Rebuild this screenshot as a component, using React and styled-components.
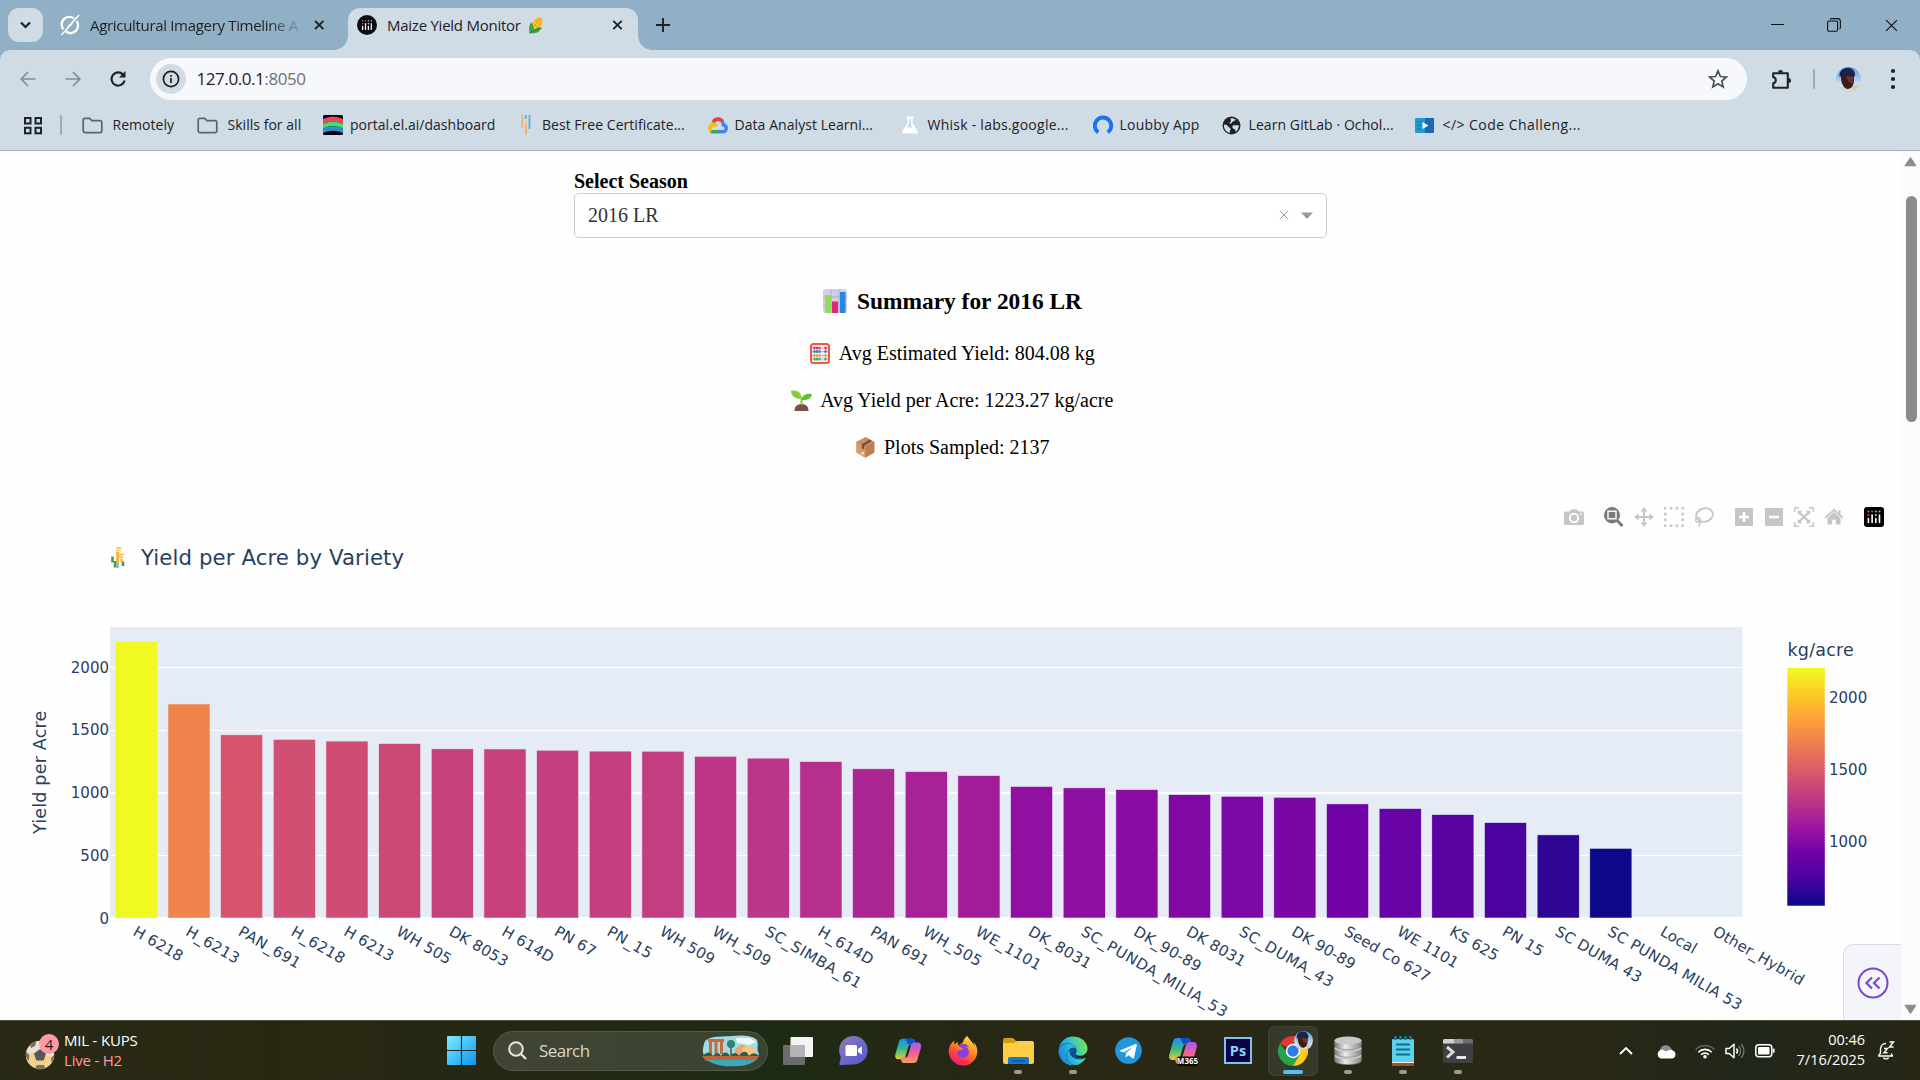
import React from "react";
import styled, { createGlobalStyle, css } from "styled-components";
import { FaEdge, FaFirefoxBrowser } from "react-icons/fa";

const UI = `"Open Sans", "Noto Sans", sans-serif`;
const SERIF = `"Liberation Serif", serif`;
const PLOT = `"DejaVu Sans", sans-serif`;

const Global = createGlobalStyle`
  * { box-sizing: border-box; }
  body { margin: 0; overflow: hidden; }
  svg { display: block; flex: none; }
`;

const Screen = styled.div`
  width: 1920px;
  height: 1080px;
  display: flex;
  flex-direction: column;
  overflow: hidden;
  font-family: ${UI};
  color: #1f2124;
`;

/* ---------- browser frame ---------- */

const TabStrip = styled.div`
  height: 50px;
  display: flex;
  background: #91afc5;
  flex: none;
`;

const TabSearch = styled.div`
  width: 35px;
  height: 34px;
  margin: 8px 0 0 8px;
  border-radius: 11px;
  background: #cfdce5;
  display: flex;
  align-items: center;
  justify-content: center;
`;

const Tab = styled.div`
  position: relative;
  display: flex;
  align-items: center;
  height: 42px;
  margin-top: 8px;
  padding-bottom: 8px;
  width: ${(p) => p.$w}px;
  padding-left: ${(p) => p.$pl}px;
  ${(p) =>
    p.$active &&
    css`
      background: #cfdce5;
      border-radius: 12px 12px 0 0;
      &::before,
      &::after {
        content: "";
        position: absolute;
        bottom: 0;
        width: 14px;
        height: 14px;
      }
      &::before {
        left: -14px;
        background: radial-gradient(circle at 0 0, #91afc5 13.5px, #cfdce5 14px);
      }
      &::after {
        right: -14px;
        background: radial-gradient(circle at 100% 0, #91afc5 13.5px, #cfdce5 14px);
      }
    `}
`;

const TabTitle = styled.div`
  font-size: 15px;
  line-height: 20px;
  white-space: nowrap;
  overflow: hidden;
  margin-left: ${(p) => p.$ml}px;
  width: ${(p) => p.$w}px;
  letter-spacing: ${(p) => p.$ls || 0}px;
  ${(p) => p.$fade && "mask-image: linear-gradient(90deg, #000 84%, transparent 101%);"}
`;

const NewTab = styled.div`
  width: 50px;
  height: 50px;
  display: flex;
  align-items: center;
  justify-content: center;
`;

const WindowButtons = styled.div`
  margin-left: auto;
  display: flex;
  height: 50px;
  align-items: center;
`;

const WindowButton = styled.div`
  width: 57px;
  display: flex;
  justify-content: center;
`;

const ToolbarBack = styled.div`
  background: #91afc5;
  flex: none;
`;

const Toolbar = styled.div`
  height: 58px;
  padding-left: 5px;
  background: #cfdce5;
  border-radius: 10px 10px 0 0;
  display: flex;
  align-items: center;
`;

const NavButton = styled.div`
  width: 45px;
  display: flex;
  justify-content: center;
`;

const Omnibox = styled.div`
  height: 42px;
  width: 1597px;
  margin-left: 10px;
  border-radius: 21px;
  background: #f6f8fc;
  display: flex;
  align-items: center;
  padding: 0 19px 0 6px;
`;

const SiteInfo = styled.div`
  width: 30px;
  height: 30px;
  border-radius: 50%;
  background: #cfdce5;
  display: flex;
  align-items: center;
  justify-content: center;
`;

const Url = styled.div`
  margin-left: 10.5px;
  font-size: 17px;
  line-height: 24px;
  letter-spacing: -0.43px;
  flex: 1;
  span { color: #6d7177; }
`;

const ToolbarEnd = styled.div`
  display: flex;
  align-items: center;
  flex: 1;
  padding-left: 24px;
`;

const Rule = styled.div`
  width: 2px;
  height: 20px;
  border-radius: 1px;
  background: #91afc5;
  margin: ${(p) => p.$m};
`;

const Bookmarks = styled.div`
  height: 43px;
  background: #cfdce5;
  border-bottom: 1px solid #a4afbb;
  display: flex;
  align-items: center;
  padding: 0 0 8px 22.5px;
  flex: none;
`;

const Bookmark = styled.div`
  display: flex;
  align-items: center;
  width: ${(p) => p.$w}px;
  flex: none;
`;

const BookmarkIcon = styled.div`
  width: ${(p) => p.$w}px;
  flex: none;
`;

const BookmarkLabel = styled.div`
  font-size: 14px;
  line-height: 20px;
  white-space: nowrap;
  letter-spacing: ${(p) => p.$ls}px;
`;

/* ---------- page ---------- */

const Page = styled.div`
  height: 869px;
  flex: none;
  display: flex;
  background: #fefefe;
  overflow: hidden;
`;

const Content = styled.main`
  width: 1901px;
  position: relative;
  overflow: hidden;
  font-family: ${SERIF};
  font-size: 20px;
  color: #000;
`;

const Field = styled.div`
  width: 753px;
  margin: 19px auto 0;
`;

const FieldLabel = styled.div`
  font-weight: bold;
  line-height: 23px;
`;

const Dropdown = styled.div`
  height: 45px;
  border: 1px solid #ccc;
  border-radius: 5px;
  background: #fff;
  display: flex;
  align-items: center;
  justify-content: space-between;
  padding: 0 13px;
  color: #333;
`;

const DropdownIcons = styled.div`
  display: flex;
  align-items: center;
  gap: 12px;
  padding-bottom: 1px;
`;

const Summary = styled.section`
  margin-top: 49px;
  display: flex;
  flex-direction: column;
  align-items: center;
`;

const Heading = styled.h3`
  margin: 0 0 25px;
  font-size: 23.4px;
  line-height: 28px;
  display: flex;
  gap: 6px;
`;

const Stat = styled.p`
  margin: 0 0 20px;
  line-height: 27px;
  display: flex;
  gap: 5px;
`;

const EmojiBox = styled.span`
  width: ${(p) => p.$w}px;
  height: ${(p) => p.$h}px;
  display: flex;
  align-items: center;
  justify-content: center;
`;

const Modebar = styled.div`
  display: flex;
  align-items: center;
  justify-content: flex-end;
  height: 20px;
  margin-top: 26px;
  padding-right: 17px;
`;

const ModeGroup = styled.div`
  display: flex;
  gap: 10px;
  margin-left: ${(p) => p.$ml}px;
`;

const Chart = styled.svg`
  margin-top: 3px;
  font-family: ${PLOT};
  fill: #2a3f5f;
`;

const ChartTitle = styled.text`
  font-size: 21.25px;
  letter-spacing: 0.1px;
`;

const AxisTitle = styled.text`
  font-size: 17.5px;
  letter-spacing: 0.2px;
`;

const TickText = styled.text`
  font-size: 15px;
`;

const SidePanelHandle = styled.div`
  position: absolute;
  right: 0;
  bottom: 0;
  width: 58px;
  height: 76px;
  border: 1px solid #d8d9ea;
  border-width: 1px 0 0 1px;
  border-radius: 10px 0 0 0;
  background: #f4f5fb;
  display: flex;
  justify-content: center;
  padding-top: 22px;
`;

const Scrollbar = styled.div`
  width: 19px;
  background: #fbfbfb;
  display: flex;
  flex-direction: column;
  align-items: center;
  padding: 5px 0 5px;
`;

const Thumb = styled.div`
  width: 11px;
  height: 226px;
  border-radius: 6px;
  background: #8b8b8b;
  margin: 29px 0 auto 1px;
`;

/* ---------- taskbar ---------- */

const Taskbar = styled.footer`
  height: 60px;
  flex: none;
  border-top: 1px solid #4b4c3a;
  background: linear-gradient(90deg, #292a16 0%, #292712 14%, #252814 26%, #1d2a13 40%, #262815 50%, #2b2814 58%, #262916 70%, #2a2815 82%, #20261a 91%, #282716 100%);
  display: flex;
  align-items: center;
  color: #fff;
`;

const Widget = styled.div`
  display: flex;
  align-items: center;
  width: 434px;
  padding-left: 25px;
`;

const WidgetText = styled.div`
  margin: 0 0 2px 3px;
  font-size: 15px;
  line-height: 20px;
  letter-spacing: -0.2px;
  div + div { color: #ff99a4; }
`;

const Start = styled.div`
  width: 59px;
  padding-left: 13px;
`;

const SearchBox = styled.div`
  width: 275px;
  height: 40px;
  border-radius: 20px;
  border: 1px solid #55594a;
  background: linear-gradient(90deg, #414432, #384531);
  display: flex;
  align-items: center;
  padding: 0 7px 0 14px;
  font-size: 17px;
  color: #d6d7d0;
  letter-spacing: -0.55px;
`;

const SearchText = styled.div`
  margin-left: 12px;
  flex: 1;
`;

const Apps = styled.div`
  display: flex;
  margin-left: 2.5px;
`;

const AppSlot = styled.div`
  width: 55px;
  height: 59px;
  position: relative;
  display: flex;
  align-items: center;
  justify-content: center;
  &::after {
    content: "";
    display: ${(p) => (p.$state ? "block" : "none")};
    position: absolute;
    bottom: 6px;
    width: ${(p) => (p.$state === "active" ? 20 : 8)}px;
    height: 4px;
    border-radius: 2px;
    background: ${(p) => (p.$state === "active" ? "#4cc2ff" : "#9b9b90")};
  }
`;

const AppFace = styled.div`
  width: 50px;
  height: 50px;
  border-radius: 6px;
  display: flex;
  align-items: center;
  justify-content: center;
  ${(p) => p.$active && "background: #37392a; border: 1px solid #414334;"}
`;

const Tray = styled.div`
  margin-left: auto;
  display: flex;
  align-items: center;
  padding-right: 13px;
`;

const TrayIcon = styled.div`
  width: ${(p) => p.$w}px;
  display: flex;
  justify-content: center;
`;

const Clock = styled.div`
  width: 81px;
  margin-bottom: 2px;
  text-align: right;
  font-size: 14.5px;
  line-height: 20px;
  letter-spacing: -0.03px;
`;

/* ---------- icons ---------- */

const Svg = ({ w = 20, h, vb, children, ...rest }) => (
  <svg width={w} height={h || w} viewBox={vb || `0 0 ${w} ${h || w}`} fill="none" {...rest}>
    {children}
  </svg>
);

const CloseX = ({ s = 10, c = "#1f2124", sw = 1.9 }) => (
  <Svg w={s} vb="0 0 10 10">
    <path d="M.8.8l8.400 8.400M9.200.8L.8 9.200" stroke={c} strokeWidth={sw} />
  </Svg>
);

const GrokIcon = () => (
  <Svg w={20} h={22} vb="0 0 20 22">
    <path d="M14 4.6A7.6 7.6 0 0 0 3.4 15.4M6 17.6A7.6 7.6 0 0 0 16.6 7" stroke="#fff" strokeWidth="2.4" />
    <path d="M19 1L7.6 13.4M12.6 8.8L1.4 21" stroke="#fff" strokeWidth="1.5" />
  </Svg>
);

const PlotlyMark = ({ round }) => (
  <Svg w={20}>
    <rect width="20" height="20" rx={round ? 10 : 3} fill={round ? "#0b0d14" : "#000"} />
    <g transform={round ? "translate(2.2 2.4) scale(.78)" : ""}>
      <g stroke="#fff" strokeWidth="1.6" strokeLinecap="round">
        <path d="M4.4 11.5v4M8.1 8v7.5M11.8 11.5v4M15.5 8v7.5" />
      </g>
      <g>
        <circle cx="4.4" cy="4.4" r="1" fill="#e763a0" />
        <circle cx="8.1" cy="4.4" r="1" fill="#ff2c6d" />
        <circle cx="11.8" cy="4.4" r="1" fill="#b7a4d8" />
        <circle cx="15.5" cy="4.4" r="1" fill="#8fb8e8" />
        <circle cx="4.4" cy="8" r="1" fill="#ff2c6d" />
        <circle cx="11.8" cy="8" r="1" fill="#cfc4e8" />
      </g>
    </g>
  </Svg>
);

const Corn = () => (
  <Svg w={16} h={18} vb="0 0 16 18">
    <path d="M4 11C4 5 8 .5 13.500 1.200 16 6 13 12 8 15z" fill="#fcc21b" />
    <path d="M7 4.500l6 5M9 2.500l5 4M5.500 7.500l5 4.500M12.500 1.500L5 12" stroke="#f79329" strokeWidth=".7" />
    <path d="M3.500 6C1 9 .5 13 1.500 17 6 18.200 11 17 13.500 12 10 10.500 8 12 6.500 14 5.500 11 5 8 3.500 6z" fill="#3aa84a" />
    <path d="M1.500 17C5 15.500 9 12.500 13.500 12" stroke="#1f7a38" strokeWidth=".9" />
  </Svg>
);

const Folder = () => (
  <Svg w={21} h={17}>
    <path d="M1.200 3.200c0-1.200.7-1.900 1.800-1.900h4.600l2.300 2.300h8c1.200 0 1.900.8 1.900 1.900v8.300c0 1.200-.7 1.900-1.900 1.900H3c-1.100 0-1.800-.7-1.800-1.900z" stroke="#5f6368" strokeWidth="1.700" />
  </Svg>
);

const PortalIcon = () => (
  <Svg w={20}>
    <rect width="20" height="20" rx="1.500" fill="#050505" />
    <path d="M0 4Q10-1 20 4v5Q10 4 0 9z" fill="#ee4560" />
    <path d="M0 9Q10 4 20 9v4.500Q10 9 0 13.500z" fill="#48dd6b" />
    <path d="M0 13.500Q10 9 20 13.500V18Q10 13.500 0 18z" fill="#2b8fd0" />
  </Svg>
);

const BarsIcon = () => (
  <Svg w={10} h={22}>
    <path d="M1.300 1v13M5 7v1.500M5 10v11" stroke="#f2b366" strokeWidth="1.800" />
    <path d="M4.800 1v4M8.500 1v14" stroke="#52b3dd" strokeWidth="1.800" />
  </Svg>
);

const CloudIcon = () => (
  <Svg w={20} h={17}>
    <path d="M5.200 5.500a5.200 5.200 0 0 1 9.400-.8" stroke="#ea4335" strokeWidth="3.600" />
    <path d="M14 4.500c1 .9 1.300 2 1.400 3.200a3.600 3.600 0 0 1-.8 7.100H10" stroke="#4285f4" strokeWidth="3.600" />
    <path d="M10 14.800H5.200c-.9 0-1.500-.2-2.100-.6" stroke="#34a853" strokeWidth="3.600" />
    <path d="M3.400 14.300A3.800 3.800 0 0 1 5.300 7.500c1.300 0 2.500.6 3.100 1.700" stroke="#fbbc05" strokeWidth="3.600" />
  </Svg>
);

const Flask = () => (
  <Svg w={16} h={18}>
    <path d="M4.500.5h7v2h-1v4.500l5 8c.8 1.500 0 2.500-1.500 2.500H2c-1.500 0-2.300-1-1.500-2.500l5-8V2.500h-1z" fill="#fff" />
    <path d="M7 3v4.500l-2.600 4h4.400l1.200 1.300L9 7.500V3z" fill="#cfdce5" />
  </Svg>
);

const Loubby = () => (
  <Svg w={20} h={20}>
    <path d="M5.200 17.400A8.200 8.200 0 1 1 14.800 17.400" stroke="#1a73f0" strokeWidth="4" />
  </Svg>
);

const Globe = () => (
  <Svg w={19}>
    <circle cx="9.500" cy="9.500" r="9" fill="#1f2124" />
    <path d="M2 8.500c2 .3 3.600.5 4 2 .3 1.100 2.200.6 2.500 2 .2 1.200-.8 2-.8 4.500C4 16 1.500 12.500 2 8.500zM8.500 2.300C10 2 13 2.600 14 4c-1.500.2-1.800 1.300-3 1.500-1.600.3-1 2-2.500 2.200C7 7.800 7.500 6 9 5.500zM11 9.500c2-.7 4 0 5.800-.5.3 3-1.500 5.800-3.300 6.800 0-2-.5-2.600-2-3-1.300-.4-1.500-2.800-.5-3.300z" fill="#cfdce5" />
  </Svg>
);

const CodeIcon = () => (
  <Svg w={19} h={15}>
    <rect width="19" height="15" rx="1" fill="#1f9bcf" />
    <path d="M10 0h8a1 1 0 0 1 1 1v13a1 1 0 0 1-1 1h-8z" fill="#1c69b0" />
    <path d="M2 4h5M2 7.500h4M2 11h5" stroke="#1777ad" strokeWidth="1" />
    <path d="M7.500 4l6 3.500-6 3.500z" fill="#fff" />
  </Svg>
);

const Puzzle = () => (
  <Svg w={22} h={22}>
    <path d="M2.200 5.200h14.600v14.600H2.200v-4.600c3.400-.3 3.400-5.600 0-5.900z" stroke="#1f2124" strokeWidth="2.100" strokeLinejoin="round" />
    <path d="M7 4.600a2.500 2.600 0 0 1 5 0zM17.400 10a2.600 2.500 0 0 1 0 5z" fill="#1f2124" />
  </Svg>
);

const Avatar = ({ s = 25, id }) => (
  <Svg w={s} vb="0 0 25 25">
    <defs>
      <clipPath id={id}><circle cx="12.500" cy="12.500" r="12.500" /></clipPath>
      <linearGradient id={id + "s"} x2="0" y2="1"><stop stopColor="#5d9bdd" /><stop offset=".8" stopColor="#dceaf6" /></linearGradient>
    </defs>
    <g clipPath={`url(#${id})`}>
      <rect width="25" height="25" fill={`url(#${id}s)`} />
      <path d="M12 20l13-3v8H0v-5z" fill="#d5cba7" />
      <path d="M3 25c0-5 4-7 9-6 4 .5 6 3 7 6z" fill="#cfd9d2" />
      <path d="M5 8c-.5 7 2 13 6.500 14 4 0 6.500-4 6.500-9V8z" fill="#3a1d17" />
      <path d="M10 9c2 6 4 8 7 7l.5-6z" fill="#6b352a" />
      <path d="M3.500 10C3 4 7 .5 12 .8c5 .2 7.500 4 7 8.700-3-2-8-2-9.500-.5C7.500 8.500 5 9 3.500 10z" fill="#17244f" />
    </g>
  </Svg>
);

const BarEmoji = () => (
  <Svg w={24} h={24}>
    <rect width="24" height="24" rx="3" fill="#d3cfe2" />
    <path d="M0 8h24M0 16h24M8 0v24M16 0v24" stroke="#b3adc8" strokeWidth="1" />
    <rect x="2" y="6" width="6" height="18" fill="#8ddf5b" />
    <rect x="9" y="12.500" width="6" height="11.500" fill="#e2247a" />
    <rect x="17" y="3" width="5.500" height="21" fill="#2489e0" />
  </Svg>
);

const Abacus = () => {
  const rows = [[5, "#e8305f"], [8.5, "#2f7fd0"], [12.5, "#f5a524"], [16, "#2fae74"]];
  return (
    <Svg w={20} h={21}>
      <rect x="1" y="1" width="18" height="19" rx="2.500" fill="#f3eef6" stroke="#f4563f" strokeWidth="2" />
      {rows.map(([y, c]) => (
        <g key={y} fill={c}>
          <path d={`M2 ${y}h16`} stroke="#a9a3b5" strokeWidth=".7" />
          {[4.5, 7, 9.5, 15.5].map((x) => <ellipse key={x} cx={x} cy={y} rx="1.250" ry="1.600" />)}
        </g>
      ))}
    </Svg>
  );
};

const Seedling = () => (
  <Svg w={21} h={21}>
    <path d="M3.500 21c0-5 3-7 7-7s7 2 7 7z" fill="#7d4e46" />
    <path d="M10.500 15V9" stroke="#7fc93a" strokeWidth="2" />
    <path d="M0 .8C6-.5 10.500 2 10.800 9 4.500 9 .5 7 0 .8z" fill="#82cf3a" />
    <path d="M21 4C15 3 11 5 10.500 10 16 10.500 20.500 9 21 4z" fill="#69bd33" />
  </Svg>
);

const Package = () => (
  <Svg w={19} h={21}>
    <path d="M9.500.3L18.500 5v10.500l-9 5.200-9-5.200V5z" fill="#b97f55" />
    <path d="M.5 5l9 4.700v11l-9-5.200z" fill="#d79a6b" />
    <path d="M9.500.3L18.500 5l-9 4.700L.5 5z" fill="#c78f63" />
    <path d="M13.500 2.400L5.800 7.200v4l2.400 1.300V8.700L16 4z" fill="#7b4f35" />
    <rect x="5.500" y="15" width="2.600" height="2.600" fill="#f2ded0" />
  </Svg>
);

const G = "#c6c6c6";
const Camera = () => (
  <Svg w={20}>
    <path d="M1.500 4.500h4L7 2.200h6l1.500 2.300h4A1.500 1.500 0 0 1 20 6v10.500a1.500 1.500 0 0 1-1.500 1.500h-17A1.500 1.500 0 0 1 0 16.500V6a1.500 1.500 0 0 1 1.500-1.500z" fill={G} />
    <circle cx="10" cy="11" r="4.200" stroke="#fff" strokeWidth="1.900" />
    <rect x="16.300" y="6.300" width="1.700" height="1.500" fill="#fff" />
  </Svg>
);
const ZoomIcon = () => (
  <Svg w={20}>
    <ellipse cx="8" cy="8.200" rx="8" ry="8.200" fill="#7a7a7a" />
    <path d="M12.500 13l6 6" stroke="#7a7a7a" strokeWidth="3" />
    <rect x="4" y="4.200" width="8" height="7.600" stroke="#fff" strokeWidth="1.400" />
  </Svg>
);
const Pan = () => (
  <Svg w={20}>
    <path d="M10 3v14M3 10h14" stroke={G} strokeWidth="1.900" />
    <path d="M10 0l3.500 4.500h-7zM10 20l3.500-4.500h-7zM0 10l4.500-3.500v7zM20 10l-4.500-3.500v7z" fill={G} />
  </Svg>
);
const BoxSelect = () => (
  <Svg w={20}>
    <path d="M0 1.300h20M0 18.700h20" stroke={G} strokeWidth="2.500" strokeDasharray="2.500 3.300" />
    <path d="M1.300 5.800v10M18.700 5.800v10" stroke={G} strokeWidth="2.500" strokeDasharray="2.500 3.300" />
  </Svg>
);
const Lasso = () => (
  <Svg w={20}>
    <ellipse cx="10.500" cy="8" rx="8.500" ry="6.700" transform="rotate(-14 10.500 8)" stroke={G} strokeWidth="1.900" />
    <path d="M2.500 11c-1.500 1.500-1 4 1 4.200 2.500.2 3.500-2 2.400-3.500-.8-1.200-2.400-1.200-3.400-.7M5.700 14.500c.5 1.800.2 3.500-1.300 5" stroke={G} strokeWidth="1.500" />
  </Svg>
);
const Sq = ({ plus }) => (
  <Svg w={20}>
    <rect x="1" y="1" width="18" height="18" fill={G} />
    <path d={plus ? "M10 5v10M5 10h10" : "M5 10h10"} stroke="#fff" strokeWidth="2.600" />
  </Svg>
);
const AutoScale = () => (
  <Svg w={20}>
    <path d="M.7 5V.7H5M15 .7h4.300V5M19.300 15v4.300H15M5 19.300H.7V15" stroke={G} strokeWidth="1.400" />
    <path d="M5 5l10 10M15 5L5 15" stroke={G} strokeWidth="2.200" />
    <path d="M3.800 3.800h4.500L3.800 8.300zM16.200 3.800v4.500l-4.500-4.500zM16.200 16.200h-4.500l4.500-4.500zM3.800 16.200v-4.500l4.500 4.500z" fill={G} />
  </Svg>
);
const Home = () => (
  <Svg w={20}>
    <path d="M3.500 11L10 5l6.500 6v6.500h-4.700v-4.700H8.200v4.700H3.500z" fill={G} />
    <path d="M1.200 10.800L10 3l8.800 7.800M15.600 3v4.500" stroke={G} strokeWidth="1.900" />
  </Svg>
);

const Ball = () => (
  <Svg w={36} h={40}>
    <circle cx="15" cy="24" r="14.200" fill="#f0d28c" />
    <path d="M15 10a14 14 0 0 1 14 14c-4 4-8-2-14-3-5-1-10 4-13.500 0A14 14 0 0 1 15 10z" fill="#e8e2d4" />
    <path d="M15 18l6 4.500-2.300 7h-7.400L9 22.500z" fill="#55565c" />
    <path d="M1 21l3.500 3-1 6C1 27 .5 24 1 21zM10 37l2-3h7l1 3c-3 1.500-7 1.500-10 0zM5 14c2-2.500 4-3.300 6.500-3.700L10 15l-4 2zM29 24l-3 3 .5 4.500C28.500 29 29 27 29 24z" fill="#77715f" />
    <circle cx="24" cy="13" r="10" fill="#ff99a4" />
    <text x="24" y="18.500" fontSize="15" textAnchor="middle" fill="#1b1b1b" fontFamily="Open Sans, sans-serif">4</text>
  </Svg>
);

const WinLogo = () => (
  <Svg w={29} h={29}>
    <defs><linearGradient id="win" x2="1" y2="1"><stop stopColor="#7df0ff" /><stop offset="1" stopColor="#0a93f5" /></linearGradient></defs>
    <path d="M0 1a1 1 0 0 1 1-1h12.900v13.900H0zM15.100 0H28a1 1 0 0 1 1 1v12.900H15.100zM0 15.100h13.900V29H1a1 1 0 0 1-1-1zM15.100 15.100H29V28a1 1 0 0 1-1 1H15.100z" fill="url(#win)" />
  </Svg>
);

const SearchArt = () => (
  <Svg w={58} h={32}>
    <path d="M3 6C10 0 22 2 30 1s20-1 25 4c2 5-1 9 2 14-2 7-8 10-18 11-12 2-24 0-32-4C-2 20 1 12 3 6z" fill="#a6dbe6" />
    <path d="M34 3h14l6 4-7 3-12-2z" fill="#fff" opacity=".8" />
    <path d="M6 4h16v3H6zM7 7h3v12H7zM12.500 7h3v12h-3zM18 7h3v12h-3z" fill="#c56c3c" />
    <path d="M33 14l7-5 9 5v7H33z" fill="#efa56a" />
    <path d="M40 13l7-2 6 4v6H40z" fill="#f5c77c" />
    <circle cx="29" cy="9" r="4" fill="#2f8473" />
    <path d="M29 12v8" stroke="#6b4b2e" strokeWidth="1.500" />
    <path d="M1 21c4-5 8-4 10 0 3-4 6-4 8 0 3-5 7-4 9 0 3-4 7-4 9 0 4-6 8-5 10 0 4-4 7-3 10 0z" fill="#276052" />
    <path d="M0 21h57l-3 5H4z" fill="#bd6638" />
    <path d="M5 25h48c-3 4-9 5.500-16 6-12 1-24 0-32-6z" fill="#3aa9bd" />
  </Svg>
);

const TaskView = () => (
  <Svg w={30} h={28}>
    <rect x="0" y="8" width="22" height="20" rx="1" fill="#6b6b6b" />
    <rect x="7.500" y="0" width="22.500" height="20" rx="1" fill="#f4f4f4" />
    <rect x="7.500" y="8" width="14.500" height="12" fill="#b4b4b4" />
  </Svg>
);
const Chat = () => (
  <Svg w={29} h={29}>
    <defs><linearGradient id="chat" x2="1" y2="1"><stop stopColor="#8f78b8" /><stop offset="1" stopColor="#4e5bd6" /></linearGradient></defs>
    <path d="M14.500 0a14.200 14.200 0 1 1 0 28.400L1.500 29c-1 0-1.200-.5-1-1.200L1.800 21A14.200 14.200 0 0 1 14.500 0z" fill="url(#chat)" />
    <rect x="6.500" y="9" width="11.500" height="11" rx="1.500" fill="#fff" />
    <path d="M19 13l3.800-2.500v8L19 16z" fill="#fff" />
  </Svg>
);
const Copilot = ({ id, badge }) => (
  <Svg w={30} h={30}>
    <defs>
      <linearGradient id={id + "a"} x2="0" y2="1"><stop stopColor="#1c8ef0" /><stop offset=".5" stopColor="#35b98a" /><stop offset="1" stopColor="#e8cf2e" /></linearGradient>
      <linearGradient id={id + "b"} x2="0" y2="1"><stop stopColor="#a25cf0" /><stop offset=".5" stopColor="#ef5f96" /><stop offset="1" stopColor="#fb9a5a" /></linearGradient>
    </defs>
    <g transform={badge ? "" : "translate(1.200 1) scale(.93)"}>
      <path d="M9 2h10c2 0 3 1 3.500 2.500L23 8h-4c-2.500 0-3.500 1-4.200 3.500l-2.600 9C11.500 23 10 24 8 24H4.500C1.500 24 .5 21.500 1.300 18.500L5 5.500C5.700 3 7 2 9 2z" fill={`url(#${id}a)`} />
      <path d="M12 2h7c2 0 3 1 3.500 2.500L23 8h-8z" fill="#1550cc" />
      <path d="M21 28H11c-2 0-3-1-3.500-2.500L7 22h4c2.500 0 3.500-1 4.200-3.500l2.600-9C18.500 7 20 6 22 6h3.500c3 0 4 2.500 3.200 5.500L25 24.500C24.300 27 23 28 21 28z" fill={`url(#${id}b)`} />
    </g>
    {badge && (
      <>
        <rect x="9" y="20.500" width="21" height="9.500" rx="1.500" fill="#0c0c0c" />
        <text x="19.500" y="28.300" fontSize="8" fontWeight="bold" textAnchor="middle" fill="#fff" fontFamily="Open Sans, sans-serif">M365</text>
      </>
    )}
  </Svg>
);
const Firefox = () => (
  <Svg w={30} h={30}>
    <defs>
      <linearGradient id="ff" x1=".8" x2=".2" y2="1"><stop stopColor="#fff04a" /><stop offset=".4" stopColor="#ff8a1e" /><stop offset=".75" stopColor="#ff3647" /><stop offset="1" stopColor="#e31587" /></linearGradient>
    </defs>
    <circle cx="15" cy="16" r="8" fill="#8a3fe0" />
    <FaFirefoxBrowser x="0" y="0" size={30} fill="url(#ff)" />
  </Svg>
);
const Explorer = () => (
  <Svg w={31} h={28}>
    <path d="M0 3a2 2 0 0 1 2-2h8l4 4h15a2 2 0 0 1 2 2v6H0z" fill="#d99a10" />
    <path d="M0 6h11l3-2h15a2 2 0 0 1 2 2v19a2 2 0 0 1-2 2H2a2 2 0 0 1-2-2z" fill="#fccd45" />
    <path d="M5 27v-5a2 2 0 0 1 2-2h17a2 2 0 0 1 2 2v5z" fill="#1477cc" />
    <path d="M9 24h13" stroke="#0b4f93" strokeWidth="1.200" />
  </Svg>
);
const Edge = () => (
  <Svg w={30} h={30}>
    <defs>
      <linearGradient id="edge" x1="1" y1=".4" x2="0" y2=".75"><stop stopColor="#6fe65a" /><stop offset=".5" stopColor="#2fc0d8" /><stop offset="1" stopColor="#1680d8" /></linearGradient>
    </defs>
    <circle cx="14" cy="16" r="12.500" fill="#0d4c98" />
    <path d="M17 17c-1 4 5 6 11 4l2-11-9-4z" fill="#262815" />
    <FaEdge size={30} fill="url(#edge)" />
  </Svg>
);
const Telegram = () => (
  <Svg w={27} h={27}>
    <circle cx="13.500" cy="13.500" r="13.300" fill="#1f97d8" />
    <path d="M4.800 13.400L20.500 7c.9-.3 1.500.2 1.200 1.500l-2.600 12c-.2.900-.8 1.100-1.600.7l-4-3-2 1.900c-.3.300-.8.200-.8-.3l.1-3.600 7.200-6.400-9 5.600-3.900-1.200c-.8-.2-.8-.6-.3-.8z" fill="#fff" />
  </Svg>
);
const Photoshop = () => (
  <Svg w={28} h={27}>
    <rect x="1" y="1" width="26" height="25" fill="#0b0440" stroke="#7fc3f5" strokeWidth="2" />
    <text x="14" y="19" fontSize="14.500" fontWeight="700" textAnchor="middle" fill="#8fd0ff" fontFamily="Open Sans, sans-serif">Ps</text>
  </Svg>
);
const Chrome = () => (
  <Svg w={40} h={40}>
    <g transform="translate(5 5)">
      <path d="M15 15L2 7.500A15 15 0 0 1 28 7.500H15z" fill="#e5392c" />
      <path d="M15 15h-7L2 7.500A15 15 0 0 0 15 30l6.500-11.250z" fill="#2aa14b" />
      <path d="M15 7.500h13A15 15 0 0 1 15 30l6.500-11.250z" fill="#fdc91c" />
      <circle cx="15" cy="15" r="7.200" fill="#fff" />
      <circle cx="15" cy="15" r="5.700" fill="#2f7be8" />
    </g>
    <g transform="translate(21 0)"><Avatar s={19} id="avc" /></g>
  </Svg>
);
const Database = () => (
  <Svg w={28} h={29}>
    <defs><linearGradient id="db"><stop stopColor="#777" /><stop offset=".4" stopColor="#ededed" /><stop offset="1" stopColor="#858585" /></linearGradient></defs>
    {[19.5, 12, 4.5].map((y) => (
      <g key={y}>
        <path d={`M.5 ${y}v5c0 5.500 27 5.500 27 0v-5z`} fill="url(#db)" stroke="#777" strokeWidth=".5" />
        <ellipse cx="14" cy={y} rx="13.500" ry="4" fill="#c9c9c9" />
      </g>
    ))}
  </Svg>
);
const Notepad = () => (
  <Svg w={22} h={31}>
    <rect y="4" width="22" height="26" rx="1" fill="#5fd0ea" />
    <path d="M0 27h22v1H0z" fill="#e8eef0" />
    <path d="M0 28h22v2a1 1 0 0 1-1 1H1a1 1 0 0 1-1-1z" fill="#a5521a" />
    <path d="M4 9.500h14M4 14.500h14M4 19.500h14" stroke="#0f6d8d" strokeWidth="2" />
    <path d="M3.500 1v4M8.500 1v4M13.500 1v4M18.500 1v4" stroke="#137a9b" strokeWidth="2.600" />
  </Svg>
);
const Terminal = () => (
  <Svg w={30} h={24}>
    <rect width="30" height="24" rx="1.500" fill="#3f4043" />
    <path d="M0 1.500A1.500 1.500 0 0 1 1.500 0H11v4.500H0z" fill="#d0d0d0" />
    <path d="M11 0h9v4.500h-9z" fill="#9a9a9a" />
    <path d="M20 0h8.500A1.500 1.500 0 0 1 30 1.500v3H20z" fill="#6b6b6b" />
    <path d="M4 8l6 5-6 5.500" stroke="#d9d9d9" strokeWidth="3" />
    <path d="M13.500 18.500H23" stroke="#f3f3f3" strokeWidth="2.800" />
  </Svg>
);

/* ---------- data ---------- */

const BOOKMARKS = [
  { icon: <Folder />, iw: 30.5, w: 115, text: "Remotely", ls: 0.03 },
  { icon: <Folder />, iw: 30.5, w: 126, text: "Skills for all", ls: 0.03 },
  { icon: <PortalIcon />, iw: 27, w: 197.5, text: "portal.el.ai/dashboard", ls: 0.02 },
  { icon: <BarsIcon />, iw: 21.5, w: 187.5, text: "Best Free Certificate...", ls: 0.03 },
  { icon: <CloudIcon />, iw: 26.5, w: 193.5, text: "Data Analyst Learni...", ls: 0.06 },
  { icon: <Flask />, iw: 26, w: 191, text: "Whisk - labs.google...", ls: 0.25 },
  { icon: <Loubby />, iw: 27, w: 129, text: "Loubby App", ls: 0.2 },
  { icon: <Globe />, iw: 27, w: 193, text: "Learn GitLab · Ochol...", ls: 0.08 },
  { icon: <CodeIcon />, iw: 28, w: 170, text: "</> Code Challeng...", ls: 0.45 },
];

const VARIETIES = [
  ["H 6218", 2203], ["H_6213", 1707], ["PAN_691", 1461], ["H_6218", 1425], ["H 6213", 1411],
  ["WH 505", 1391], ["DK 8053", 1349], ["H 614D", 1348], ["PN 67", 1338], ["PN_15", 1331],
  ["WH 509", 1330], ["WH_509", 1290], ["SC_SIMBA_61", 1275], ["H_614D", 1248], ["PAN 691", 1190],
  ["WH_505", 1168], ["WE_1101", 1136], ["DK_8031", 1049], ["SC_PUNDA_MILIA_53", 1038], ["DK_90-89", 1024],
  ["DK 8031", 984], ["SC_DUMA_43", 971], ["DK 90-89", 963], ["Seed Co 627", 910], ["WE 1101", 873],
  ["KS 625", 825], ["PN 15", 761], ["SC DUMA 43", 663], ["SC PUNDA MILIA 53", 556], ["Local", 0], ["Other_Hybrid", 0],
];

const PLASMA = ["#0d0887", "#46039f", "#7201a8", "#9c179e", "#bd3786", "#d8576b", "#ed7953", "#fb9f3a", "#fdca26", "#f0f921"];

const colorAt = (v) => {
  const t = Math.min(1, Math.max(0, (v - 556) / (2203 - 556))) * 9;
  const i = Math.min(8, Math.floor(t));
  const ch = (c, k) => parseInt(c.slice(1 + 2 * k, 3 + 2 * k), 16);
  const mix = [0, 1, 2].map((k) => Math.round(ch(PLASMA[i], k) + (ch(PLASMA[i + 1], k) - ch(PLASMA[i], k)) * (t - i)));
  return `rgb(${mix.join(",")})`;
};

const tracking = (s) => ((s.match(/_/g) || []).length * 2 + (s.match(/[A-Z]/g) || []).length * 0.5) / s.length;

const X0 = 110;
const X1 = 1742.5;
const TOP = 627;
const BASE = 918;
const STEP = (X1 - X0) / VARIETIES.length;
const yOf = (v) => BASE - v * 0.1254;

const YieldChart = () => (
  <Chart width="1901" height="490" viewBox="0 530 1901 490">
    <defs>
      <linearGradient id="plasma" x1="0" y1="1" x2="0" y2="0">
        {PLASMA.map((c, i) => <stop key={c} offset={i / 9} stopColor={c} />)}
      </linearGradient>
    </defs>
    <g transform="translate(111 547)">
      <path d="M5.500 0h5l-.5 2h-.5v3h-4z" fill="#fbc646" />
      <path d="M5 4h3.500v12H5z" fill="#f7b942" />
      <path d="M8.500 6.500h5l-.5 2h-1v6.500H8.500z" fill="#fbc646" />
      <path d="M6 2.200h4M6 4.500h3M9 9h4M9 11.500h3" stroke="#fff0bd" strokeWidth="1" />
      <path d="M1.500 9.500v6M4 14v6.500M12 14.500v4.500" stroke="#4a9a57" strokeWidth="2.600" />
      <path d="M6.500 15.500v5.500" stroke="#7fb5ab" strokeWidth="2.500" />
      <path d="M4.300 5v9M8.700 11v9" stroke="#fefefe" strokeWidth=".9" />
    </g>
    <ChartTitle x="141" y="565">Yield per Acre by Variety</ChartTitle>
    <rect x={X0} y={TOP} width={X1 - X0} height={BASE - TOP} fill="#e5ecf6" />
    <g fill="#fff">
      <rect x={X0} y="667" width={X1 - X0} height="1" />
      <rect x={X0} y="730" width={X1 - X0} height="1" />
      <rect x={X0} y="792" width={X1 - X0} height="2" />
      <rect x={X0} y="855" width={X1 - X0} height="1" />
      <rect x={X0} y="917" width={X1 - X0} height="2" />
    </g>
    {VARIETIES.map(([name, v], i) => {
      const cx = X0 + STEP * (i + 0.5);
      return (
        <g key={i}>
          {v > 0 && (
            <rect x={cx - STEP * 0.4} y={yOf(v)} width={STEP * 0.8} height={BASE - yOf(v)} fill={colorAt(v)} stroke="#e5ecf6" strokeWidth=".6" />
          )}
          <TickText transform={`translate(${cx - 4.3} 934.500) rotate(30)`} letterSpacing={tracking(name)}>{name}</TickText>
        </g>
      );
    })}
    <g textAnchor="end">
      {[0, 500, 1000, 1500, 2000].map((v) => (
        <TickText key={v} x="109" y={yOf(v) + 5.5}>{v}</TickText>
      ))}
    </g>
    <AxisTitle transform="translate(46 772.300) rotate(-90)" textAnchor="middle">Yield per Acre</AxisTitle>
    <AxisTitle x="1787.500" y="656">kg/acre</AxisTitle>
    <rect x="1787.300" y="668" width="37.500" height="237.700" fill="url(#plasma)" />
    <TickText x="1829" y="703">2000</TickText>
    <TickText x="1829" y="775">1500</TickText>
    <TickText x="1829" y="847">1000</TickText>
  </Chart>
);

const APPS = [
  { icon: <TaskView /> },
  { icon: <Chat /> },
  { icon: <Copilot id="cp" /> },
  { icon: <Firefox /> },
  { icon: <Explorer />, state: "open" },
  { icon: <Edge />, state: "open" },
  { icon: <Telegram /> },
  { icon: <Copilot id="m3" badge /> },
  { icon: <Photoshop /> },
  { icon: <Chrome />, state: "active" },
  { icon: <Database />, state: "open" },
  { icon: <Notepad />, state: "open" },
  { icon: <Terminal />, state: "open" },
];

export default function App() {
  return (
    <Screen>
      <Global />
      <TabStrip>
        <TabSearch>
          <Svg w={11} h={8}><path d="M1 1.500l4.500 4.500L10 1.500" stroke="#1f2124" strokeWidth="2.200" /></Svg>
        </TabSearch>
        <Tab $w={305} $pl={17}>
          <GrokIcon />
          <TabTitle $ml={10} $w={212} $ls={-0.32} $fade>Agricultural Imagery Timeline A</TabTitle>
          <Svg w={24} h={10}><path d="M13 .8l8.400 8.400M21.400.8L13 9.200" stroke="#1f2124" strokeWidth="1.900" /></Svg>
        </Tab>
        <Tab $w={289.5} $pl={9} $active>
          <PlotlyMark round />
          <TabTitle $ml={10} $w={140.5} $ls={-0.25}>Maize Yield Monitor</TabTitle>
          <Corn />
          <Svg w={89} h={10}><path d="M69.300.8l8.400 8.400M77.700.8l-8.400 8.400" stroke="#1f2124" strokeWidth="1.900" /></Svg>
        </Tab>
        <NewTab>
          <Svg w={14}><path d="M7 0v14M0 7h14" stroke="#1f2124" strokeWidth="1.900" /></Svg>
        </NewTab>
        <WindowButtons>
          <WindowButton><Svg w={13} h={3}><path d="M0 .5h13" stroke="#111" /></Svg></WindowButton>
          <WindowButton>
            <Svg w={16} h={14}><rect x=".6" y="3" width="10" height="10.200" rx="1.500" stroke="#111" strokeWidth="1.100" /><path d="M3 1.200C3.500.7 4 .6 5 .6h5.500c2 0 2.900 1 2.900 2.900V9c0 1-.2 1.700-.8 2.200" stroke="#111" strokeWidth="1.100" /></Svg>
          </WindowButton>
          <WindowButton><CloseX s={13} c="#111" sw={0.9} /></WindowButton>
        </WindowButtons>
      </TabStrip>

      <ToolbarBack>
        <Toolbar>
          <NavButton><Svg w={16}><path d="M15.500 8H1.500M8 1L1.200 8 8 15" stroke="#848e97" strokeWidth="1.700" /></Svg></NavButton>
          <NavButton><Svg w={16}><path d="M.5 8h14M8 1l6.800 7L8 15" stroke="#848e97" strokeWidth="1.700" /></Svg></NavButton>
          <NavButton><Svg w={18}><path d="M15.600 10.500A6.600 6.600 0 1 1 14 4.500l1.500 1.600" stroke="#1f2124" strokeWidth="2.100" /><path d="M16.500 1v6.500H10z" fill="#1f2124" /></Svg></NavButton>
          <Omnibox>
            <SiteInfo>
              <Svg w={18}><circle cx="9" cy="9" r="7.600" stroke="#1f2124" strokeWidth="1.700" /><path d="M9 8v5M9 5v1.700" stroke="#1f2124" strokeWidth="1.700" /></Svg>
            </SiteInfo>
            <Url>127.0.0.1<span>:8050</span></Url>
            <Svg w={20} h={20}><path d="M10 1.800l2.400 5.700 6 .5-4.600 4 1.400 6-5.200-3.200L4.800 18l1.400-6-4.600-4 6-.5z" stroke="#4c5157" strokeWidth="1.700" /></Svg>
          </Omnibox>
          <ToolbarEnd>
            <Puzzle />
            <Rule $m="0 21px 0 20px" />
            <Avatar id="av" />
            <Svg w={54} h={22}><g fill="#1f2124"><circle cx="32" cy="3" r="2.100" /><circle cx="32" cy="11" r="2.100" /><circle cx="32" cy="19" r="2.100" /></g></Svg>
          </ToolbarEnd>
        </Toolbar>
      </ToolbarBack>

      <Bookmarks>
        <Svg w={20} h={19}><g stroke="#1f2124" strokeWidth="2"><rect x="2" y="2" width="5.500" height="5.500" /><rect x="12.500" y="2" width="5.500" height="5.500" /><rect x="2" y="11.800" width="5.500" height="5.500" /><rect x="12.500" y="11.800" width="5.500" height="5.500" /></g></Svg>
        <Rule $m="0 20px 0 17.5px" />
        {BOOKMARKS.map((b) => (
          <Bookmark key={b.text} $w={b.w}>
            <BookmarkIcon $w={b.iw}>{b.icon}</BookmarkIcon>
            <BookmarkLabel $ls={b.ls}>{b.text}</BookmarkLabel>
          </Bookmark>
        ))}
      </Bookmarks>

      <Page>
        <Content>
          <Field>
            <FieldLabel>Select Season</FieldLabel>
            <Dropdown>
              <span>2016 LR</span>
              <DropdownIcons>
                <CloseX s={10} c="#999" sw={1} />
                <Svg w={12} h={7}><path d="M0 .5h12L6 7z" fill="#999" /></Svg>
              </DropdownIcons>
            </Dropdown>
          </Field>
          <Summary>
            <Heading><EmojiBox $w={32} $h={28}><BarEmoji /></EmojiBox>Summary for 2016 LR</Heading>
            <Stat><EmojiBox $w={27.5} $h={27}><Abacus /></EmojiBox>Avg Estimated Yield: 804.08 kg</Stat>
            <Stat><EmojiBox $w={27.5} $h={27}><Seedling /></EmojiBox>Avg Yield per Acre: 1223.27 kg/acre</Stat>
            <Stat><EmojiBox $w={27.5} $h={27}><Package /></EmojiBox>Plots Sampled: 2137</Stat>
          </Summary>
          <Modebar>
            <ModeGroup $ml={0}><Camera /></ModeGroup>
            <ModeGroup $ml={20}><ZoomIcon /><Pan /><BoxSelect /><Lasso /></ModeGroup>
            <ModeGroup $ml={20}><Sq plus /><Sq /><AutoScale /><Home /></ModeGroup>
            <ModeGroup $ml={20}><PlotlyMark /></ModeGroup>
          </Modebar>
          <YieldChart />
          <SidePanelHandle>
            <Svg w={32} h={32}>
              <circle cx="16" cy="16" r="14.500" stroke="#7a48c8" strokeWidth="2" />
              <path d="M15 10.500L9.500 16l5.500 5.500M22.500 10.500L17 16l5.500 5.500" stroke="#7a48c8" strokeWidth="2.200" />
            </Svg>
          </SidePanelHandle>
        </Content>
        <Scrollbar>
          <Svg w={13} h={11}><path d="M6.500 1.500L12 9.800H1z" fill="#8b8b8b" stroke="#8b8b8b" strokeLinejoin="round" /></Svg>
          <Thumb />
          <Svg w={13} h={11}><path d="M6.500 9.500L12 1.200H1z" fill="#8b8b8b" stroke="#8b8b8b" strokeLinejoin="round" /></Svg>
        </Scrollbar>
      </Page>

      <Taskbar>
        <Widget>
          <Ball />
          <WidgetText><div>MIL - KUPS</div><div>Live - H2</div></WidgetText>
        </Widget>
        <Start><WinLogo /></Start>
        <SearchBox>
          <Svg w={19} h={19}><circle cx="8" cy="8" r="6.800" stroke="#e4e5de" strokeWidth="2" fill="#5a5d4e" /><path d="M13 13l5 5" stroke="#e4e5de" strokeWidth="2.300" /></Svg>
          <SearchText>Search</SearchText>
          <SearchArt />
        </SearchBox>
        <Apps>
          {APPS.map((a, i) => (
            <AppSlot key={i} $state={a.state}>
              <AppFace $active={a.state === "active"}>{a.icon}</AppFace>
            </AppSlot>
          ))}
        </Apps>
        <Tray>
          <TrayIcon $w={40}><Svg w={14} h={9}><path d="M1 8l6-6 6 6" stroke="#fff" strokeWidth="1.900" /></Svg></TrayIcon>
          <TrayIcon $w={40}>
            <Svg w={20} h={16}><path d="M4 9a6 6 0 0 1 11-4l2 4-8 5z" fill="#8e8e88" /><path d="M5 15.500a4.500 4.500 0 0 1-.5-8.500c2-.5 3.500 0 5 1.500l4-1.500c3-.5 6 1 6 4.300 0 2.500-1.500 4.200-3.500 4.200z" fill="#fff" /></Svg>
          </TrayIcon>
          <TrayIcon $w={38}>
            <Svg w={20} h={16}><path d="M.7 6.500a13 13 0 0 1 18.600 0" stroke="#6c6d62" strokeWidth="1.400" /><path d="M3.300 9.200a9.400 9.400 0 0 1 13.400 0M6 11.800a5.700 5.700 0 0 1 8 0" stroke="#fff" strokeWidth="1.600" /><circle cx="10" cy="13.800" r="1.800" fill="#fff" /></Svg>
          </TrayIcon>
          <TrayIcon $w={22}>
            <Svg w={21} h={18}><path d="M1 6.500h3.200L9 2.200v13.600L4.200 11.500H1z" stroke="#fff" strokeWidth="1.500" strokeLinejoin="round" /><path d="M11.500 6.500a4 4 0 0 1 0 5" stroke="#fff" strokeWidth="1.500" /><path d="M13.700 4a7.500 7.500 0 0 1 0 10M16.200 2a10.500 10.500 0 0 1 0 14" stroke="#74756a" strokeWidth="1.400" /></Svg>
          </TrayIcon>
          <TrayIcon $w={38}>
            <Svg w={20} h={14}><rect x=".8" y=".8" width="16" height="12" rx="3" stroke="#fff" strokeWidth="1.500" /><rect x="3" y="3" width="11.500" height="7.600" rx="1" fill="#fff" /><path d="M18.700 4.700v4" stroke="#fff" strokeWidth="1.800" /></Svg>
          </TrayIcon>
          <Clock><div>00:46</div><div>7/16/2025</div></Clock>
          <TrayIcon $w={42}>
            <Svg w={18} h={19}>
              <path d="M9 2.500C5.500 2.500 3.500 5 3.500 8v4L1.500 15h14l-1.300-2.500" stroke="#fff" strokeWidth="1.400" strokeLinejoin="round" />
              <path d="M6.500 16.500c.5 1.800 4.500 1.800 5 0" stroke="#fff" strokeWidth="1.400" />
              <path d="M12.500 1h4l-4 5h4M7 7.500h3.500L7 11.700h3.500" stroke="#fff" strokeWidth="1.400" />
            </Svg>
          </TrayIcon>
        </Tray>
      </Taskbar>
    </Screen>
  );
}
